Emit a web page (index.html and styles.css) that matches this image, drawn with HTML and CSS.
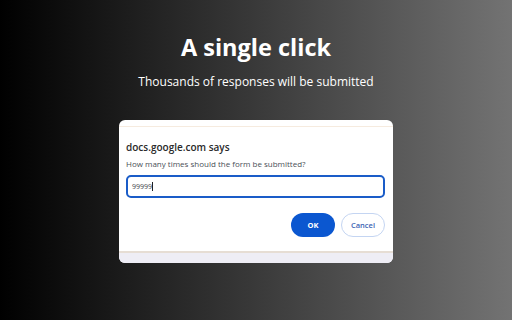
FILE: index.html
```html
<!DOCTYPE html>
<html lang="en">

<head>
    <meta charset="UTF-8">
    <meta name="viewport" content="width=device-width, initial-scale=1.0">
    <title>A single click</title>
    <link rel="stylesheet" href="styles.css">
</head>

<body>
    <div class="page">
        <h1 class="headline">A single click</h1>
        <p class="subline">Thousands of responses will be submitted</p>

        <div class="dialog">
            <div class="dialog-top"></div>
            <div class="dialog-body">
                <div class="dialog-title">docs.google.com says</div>
                <div class="dialog-text">How many times should the form be submitted?</div>
                <div class="prompt-input">99999<span class="caret"></span></div>
                <div class="dialog-actions">
                    <button class="btn btn-ok">OK</button>
                    <button class="btn btn-cancel">Cancel</button>
                </div>
            </div>
            <div class="dialog-bottom"></div>
        </div>
    </div>
</body>

</html>
```

FILE: styles.css
```css
html, body {
    margin: 0;
    padding: 0;
    width: 512px;
    height: 320px;
    overflow: hidden;
}

body {
    font-family: 'Open Sans', 'Noto Sans', sans-serif;
    background: linear-gradient(to right, #000 0%, #737373 100%);
}

.page {
    display: flex;
    flex-direction: column;
    align-items: center;
    padding-top: 32px;
}

.headline {
    margin: 0;
    font-family: 'Open Sans', sans-serif;
    font-size: 23.5px;
    font-weight: 700;
    line-height: 30px;
    color: #fff;
}

.subline {
    margin: 11px 0 0;
    font-family: 'Open Sans', sans-serif;
    font-size: 12px;
    line-height: 18px;
    color: #fff;
}

.dialog {
    margin-top: 29px;
    width: 274px;
    height: 143px;
    background-color: #fff;
    border-radius: 6px;
    overflow: hidden;
    display: flex;
    flex-direction: column;
}

.dialog-top {
    height: 6px;
    border-bottom: 1px solid #f6ebdf;
}

.dialog-body {
    flex: 1;
    padding: 13px 8px 0 7px;
}

.dialog-title {
    font-size: 10px;
    font-weight: 600;
    line-height: 14px;
    color: #2a2a2a;
}

.dialog-text {
    margin-top: 4px;
    font-size: 8px;
    line-height: 12px;
    color: #4a4f57;
}

.prompt-input {
    margin-top: 5px;
    height: 19px;
    border: 2px solid #1a5cc8;
    border-radius: 5px;
    padding-left: 4px;
    font-size: 7px;
    line-height: 19px;
    color: #3c4043;
    display: flex;
    align-items: center;
}

.caret {
    display: inline-block;
    width: 1px;
    height: 9px;
    background-color: #202124;
}

.dialog-actions {
    display: flex;
    justify-content: flex-end;
    gap: 6px;
    margin-top: 15px;
}

.btn {
    width: 44px;
    height: 24px;
    border-radius: 12px;
    font-family: 'Open Sans', sans-serif;
    font-size: 7.5px;
    padding: 0;
    cursor: pointer;
}

.btn-ok {
    background-color: #0b57d0;
    border: none;
    color: #fff;
    font-weight: 700;
}

.btn-cancel {
    background-color: #fff;
    border: 1px solid #c4d5f2;
    color: #3e64b4;
    font-weight: 600;
}

.dialog-bottom {
    height: 10px;
    border-top: 2px solid #e6ddd4;
    background-color: #eeedf5;
}
```
